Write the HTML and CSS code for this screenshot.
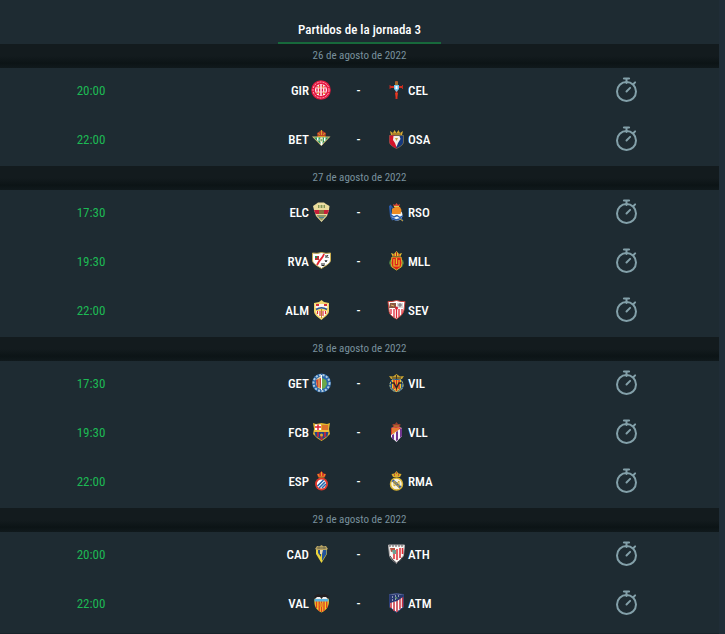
FILE: index.html
```html
<!DOCTYPE html>
<html lang="es">
<head>
<meta charset="utf-8">
<meta name="viewport" content="width=device-width, initial-scale=1">
<title>Partidos de la jornada 3</title>
<link rel="stylesheet" href="styles.css">
</head>
<body>
<svg class="defs" aria-hidden="true">
  <symbol id="stopwatch" viewBox="0 0 24 26">
    <g fill="none" stroke="currentColor" stroke-width="2">
      <circle cx="11.500" cy="14.500" r="9.500"/>
      <path d="M9 1.500h5" stroke-width="2.200" stroke-linecap="round"/>
      <path d="M11.500 2v4M18.500 7l1.600-1.600M11.500 14.500l3.600-3.600" stroke-linecap="round"/>
    </g>
  </symbol>
</svg>
<main class="panel">
  <header class="head"><h1 class="title">Partidos de la jornada 3</h1></header>

  <section>
    <h2 class="date">26 de agosto de 2022</h2>
    <article class="match">
      <time class="hour">20:00</time>
      <div class="teams">
        <span class="home">GIR</span>
        <svg class="crest" viewBox="0 0 20 20"><circle cx="10" cy="10" r="9.8" fill="#e5173f"/><circle cx="10" cy="10" r="8" fill="none" stroke="#ffb3bf" stroke-width="1" stroke-dasharray="2 1"/><circle cx="10" cy="10" r="6" fill="#fff"/><path d="M6 6v8M8.600 4.500v11M11.400 4.500v11M14 6v8" stroke="#e5173f" stroke-width="1.400"/><path d="M5 8h10M5 12h10" stroke="#ffd2d2"/><path d="M8 6v2M12 6v2M7 12v2M13 12v2" stroke="#e99a20"/></svg>
        <span class="dash">-</span>
        <svg class="crest" viewBox="0 0 20 20"><path d="M10.500 1v18M4 7h13" stroke="#d02f20" stroke-width="2"/><path d="M4 5v4M16.500 5v4" stroke="#b92b20"/><path d="M8 5h5v4l-2.500 3L8 9z" fill="#72c6ed"/><path d="M9.500 6h2v3h-2z" fill="#fff"/><path d="M9 1.500h3V5H9z" fill="#a06b2b"/><path d="M9 13l1.500 6 1.500-6z" fill="#e63922"/></svg>
        <span class="away">CEL</span>
      </div>
      <svg class="status" role="img" aria-label="Pendiente"><use href="#stopwatch"/></svg>
    </article>
    <article class="match">
      <time class="hour">22:00</time>
      <div class="teams">
        <span class="home">BET</span>
        <svg class="crest" viewBox="0 0 20 20"><path d="M1 7.500h18.500L10.300 17z" fill="#d6bd72"/><path d="M3 8.500h14.500L10.300 15.500z" fill="#1f9660"/><path d="M6 8.500h1.500v4L6 11zM9.500 8.500h2v7l-1 1-1-1zM13 8.500h1.500v3L13 12.500z" fill="#fff"/><circle cx="10.400" cy="11" r="2" fill="#eee5ae"/><path d="M9.500 11h2" stroke="#168250"/><path d="M6.500 7.500L6 4l2.500-1.500L10.400 1l2 1.500L15 4l-.5 3.500z" fill="#bc4028"/><path d="M6.500 7.500h8M7.500 4l1 2M13.500 4l-1 2M10.500 1v5" stroke="#d9a02c"/></svg>
        <span class="dash">-</span>
        <svg class="crest" viewBox="0 0 20 20"><path d="M3.500 6.500h14V13c0 3-4 5-7 6.500-3-1.500-7-3.500-7-6.500z" fill="#16397d" stroke="#b79c54" stroke-width=".5"/><path d="M3.500 6.500H9l1.500 13c-3-1.500-7-3.500-7-6.500z" fill="#d3132b"/><path d="M7.500 7h6l1 3-2.500 4-1.500 4L9 14l-2-3z" fill="#f3eee8"/><path d="M9 9h3l-1.500 3z" fill="#c9a23f"/><path d="M5 6L4 2l3 2 1.500-3 2 3 2-3L14 4l3-2-1 4z" fill="#d8ac32"/><path d="M6 5h9" stroke="#7d5520"/></svg>
        <span class="away">OSA</span>
      </div>
      <svg class="status" role="img" aria-label="Pendiente"><use href="#stopwatch"/></svg>
    </article>
  </section>

  <section>
    <h2 class="date">27 de agosto de 2022</h2>
    <article class="match">
      <time class="hour">17:30</time>
      <div class="teams">
        <span class="home">ELC</span>
        <svg class="crest" viewBox="0 0 20 20"><path d="M2 4l3-2 2-1.500h6l2 1.500 3.500 2-.5 4-2 6-5.500 6-5.500-6-2-6z" fill="#eadb9c"/><path d="M3 8h5v4H4.500zM12.500 8H18l-1.500 4h-4z" fill="#c71f39"/><path d="M8 8h5v4H8z" fill="#8b713c"/><path d="M5.500 13h10l-5 5.500z" fill="#4a8391"/><path d="M7 3h7v3H7z" fill="#839451"/><path d="M9 2v4M12 2v4" stroke="#f2e8bd"/><path d="M6 14h9M8 17h4" stroke="#d1a640"/></svg>
        <span class="dash">-</span>
        <svg class="crest" viewBox="0 0 20 20"><path d="M4 3l13 16" stroke="#2659a7" stroke-width="1.500"/><path d="M4 4l1 10 2 4" fill="none" stroke="#2c5eaf" stroke-width="2"/><circle cx="11" cy="13" r="5.500" fill="#f1f5f5"/><path d="M5 13l3 2 3-1.500 3 2 3-1.500M6 16l4 2 5-1.500" fill="none" stroke="#295cab" stroke-width="1.500"/><path d="M6 12V7l3-2h5l1.500 3-1 4z" fill="#ee8b23"/><path d="M8 5L7 2l2 1 1.500-2L12 3l2-1-1 3z" fill="#df4935"/><path d="M8 4.500h5" stroke="#dbcb59"/><path d="M14 17l3 2" stroke="#d5a328"/></svg>
        <span class="away">RSO</span>
      </div>
      <svg class="status" role="img" aria-label="Pendiente"><use href="#stopwatch"/></svg>
    </article>
    <article class="match">
      <time class="hour">19:30</time>
      <div class="teams">
        <span class="home">RVA</span>
        <svg class="crest" viewBox="0 0 20 20"><path d="M1.500 2Q6 3 10.500 1.500 15 3 19.500 2v7c0 4-6 6-9 8.500C7 15 1.500 13 1.500 9z" fill="#fff" stroke="#c9ad51"/><path d="M13 3q-1 3-3 5t-4 6" fill="none" stroke="#e72832" stroke-width="1.800"/><path d="M4 5h4v4H4z" fill="#b83432"/><path d="M4 5h2v2H4z" fill="#2c8756"/><path d="M15 4v3M17 4l-1 1.500L17.500 7M14 9l1 2 1-2M11 12v3l1-1 1 1v-3" fill="none" stroke="#222"/></svg>
        <span class="dash">-</span>
        <svg class="crest" viewBox="0 0 20 20"><path d="M5 9l-1 3 2 4M16 9l1 3-2 4" stroke="#477744" stroke-width="2" fill="none"/><path d="M6 6h9l1 6-1 4-4.500 3L6 16l-1-4z" fill="#dd2119" stroke="#dab82c"/><path d="M8 8v7h5V9M10.500 7v6" fill="none" stroke="#e8bf2b" stroke-width="1.200"/><path d="M6.500 5L5 2l3 1 2.500-3L13 3l3-1-1.500 3z" fill="#e9c330"/><path d="M10.500 1v4M8 3v2M13 3v2" stroke="#b9281e"/></svg>
        <span class="away">MLL</span>
      </div>
      <svg class="status" role="img" aria-label="Pendiente"><use href="#stopwatch"/></svg>
    </article>
    <article class="match">
      <time class="hour">22:00</time>
      <div class="teams">
        <span class="home">ALM</span>
        <svg class="crest" viewBox="0 0 20 20"><path d="M3 3l5-1 2.500-2L13 2l5 1v8c0 4-5 6-7.500 9C7 17 3 15 3 11z" fill="#f3d66b"/><path d="M4.500 4h12v4h-12z" fill="#fff3ec"/><path d="M5 4h3v2H5zM13 4h3v2h-3z" fill="#d53137"/><path d="M5 9.500q5.500-3.500 11 0" fill="none" stroke="#27569a" stroke-width="1.500"/><path d="M5 11h11c0 3-3 5-5.500 7C8 16 5 14 5 11z" fill="#fff"/><path d="M6.500 11v3M9 11v5M12 11v5M14.500 11v3" stroke="#d62b34" stroke-width="1.200"/><path d="M10.500 9v9" stroke="#bd842c"/></svg>
        <span class="dash">-</span>
        <svg class="crest" viewBox="0 0 20 20"><path d="M2 1.500Q6 2 10.500.5 15 2 19 1.500L18 10c-1 5-5 7-7.500 9C7 17 3 15 3 10z" fill="#fff" stroke="#c8433d"/><path d="M4 3h6v5H3z" fill="#8b5943"/><path d="M11 3h6v5h-6z" fill="#d9d5d5"/><path d="M12 5h4M14 3v4" stroke="#6d6d78"/><path d="M5 9v5M8 9v8M10.500 9v9M13 9v8M16 9v5" stroke="#df2736" stroke-width="1.300"/><path d="M5 5l3 1" stroke="#e5b46b"/><circle cx="10.500" cy="8" r="1.500" fill="#d52030"/></svg>
        <span class="away">SEV</span>
      </div>
      <svg class="status" role="img" aria-label="Pendiente"><use href="#stopwatch"/></svg>
    </article>
  </section>

  <section>
    <h2 class="date">28 de agosto de 2022</h2>
    <article class="match">
      <time class="hour">17:30</time>
      <div class="teams">
        <span class="home">GET</span>
        <svg class="crest" viewBox="0 0 20 20"><circle cx="10.500" cy="10" r="9.500" fill="#2a68aa"/><circle cx="10.500" cy="10" r="8" fill="none" stroke="#b6cbda" stroke-width="2" stroke-dasharray="2 1.500"/><path d="M5.500 6L10 3v13l-3-1-2-4z" fill="#e5d7ac"/><path d="M5 7l5-2v10l-4-1z" fill="#c94336"/><path d="M8 6v9" stroke="#efcf55"/><path d="M11 5l4 2 1 4-2 4-3 1z" fill="#6ca849"/><path d="M10.500 2v15" stroke="#fff"/></svg>
        <span class="dash">-</span>
        <svg class="crest" viewBox="0 0 20 20"><circle cx="10.500" cy="12" r="7.200" fill="#245b96"/><circle cx="10.500" cy="12" r="6.500" fill="none" stroke="#d7c25b" stroke-dasharray="2 1"/><path d="M6 7h9v8l-4.500 4L6 15z" fill="#f0ca2d"/><path d="M8 7v9M10.500 7v11M13 7v9" stroke="#d12a27" stroke-width="1.400"/><path d="M5 10h3l2.500 5L13 10h3" fill="none" stroke="#292829" stroke-width="1.500"/><path d="M5 6L3 3l4 .5L10.500 1l3.500 2.500L18 3l-2 3z" fill="#c5a131"/><path d="M6 5h9M10.500 2v4" stroke="#423421"/></svg>
        <span class="away">VIL</span>
      </div>
      <svg class="status" role="img" aria-label="Pendiente"><use href="#stopwatch"/></svg>
    </article>
    <article class="match">
      <time class="hour">19:30</time>
      <div class="teams">
        <span class="home">FCB</span>
        <svg class="crest" viewBox="0 0 20 20"><path d="M2 1l3 1 5.500-1L16 2l3-1-1 6 1 5-4 4-4.500 3L6 16l-4-4 1-5z" fill="#e2b22c"/><path d="M4 2.500h6V8H4z" fill="#fff"/><path d="M7 2.500V8M4 5h6" stroke="#e0212f" stroke-width="1.500"/><path d="M12 3v5M14 3v5M16 3v5" stroke="#db302a"/><path d="M3 8h15v2H3z" fill="#edc13d"/><path d="M3.500 10h14l-1 4-6 4-6-4z" fill="#23458a"/><path d="M7 10v5M14 10v5M10.500 14v4" stroke="#b42a41" stroke-width="2"/><circle cx="10.500" cy="13" r="1.500" fill="#dfa92a"/></svg>
        <span class="dash">-</span>
        <svg class="crest" viewBox="0 0 20 20"><path d="M5 6q6-2 11 0v8l-5.500 6L5 15z" fill="#f8f3fa"/><path d="M5 6q5-2 10.500 0L5 13z" fill="#d8382b"/><path d="M6 7h7M6 9h5M6 11h3" stroke="#f0c43d"/><path d="M6 13l2-1v6l-2-2zM10 10l2-1v9l-2 1zM14 7l2-1v8l-2 2z" fill="#70358e"/><path d="M7 5L6.500 2H9l1.500-2L12 2h2.500L14 5z" fill="#973e2e"/><path d="M8 4h5" stroke="#c98d32"/></svg>
        <span class="away">VLL</span>
      </div>
      <svg class="status" role="img" aria-label="Pendiente"><use href="#stopwatch"/></svg>
    </article>
    <article class="match">
      <time class="hour">22:00</time>
      <div class="teams">
        <span class="home">ESP</span>
        <svg class="crest" viewBox="0 0 20 20"><circle cx="10.500" cy="13" r="6.500" fill="#df372b"/><circle cx="10.500" cy="13" r="4.600" fill="#fff"/><path d="M6.500 15l6-6M8 17l6-6M11 17l4-4" stroke="#2567ab" stroke-width="1.600"/><path d="M7 6L6 3l2.500-.5L10.500 0l2 2.500L15 3l-1 3z" fill="#dd3526"/><path d="M7.500 6h6M10.500 1v4M7 3l1 2M14 3l-1 2" stroke="#e5a927"/></svg>
        <span class="dash">-</span>
        <svg class="crest" viewBox="0 0 20 20"><circle cx="10.500" cy="13" r="6" fill="#f7f2dc" stroke="#d9b332" stroke-width="1.500"/><path d="M5.500 10l2-1.500 8 7-2 2z" fill="#3c60a3"/><path d="M8 15v-5l2.500 3 2.500-3v5M8 15q3-3 5 2" fill="none" stroke="#d1a82c"/><path d="M7 6L5.500 3l3-.5L10.500 0l2 2.500 3 .5L14 6z" fill="#d8ad2c"/><path d="M8 4h1M12 4h1M10 2h1" stroke="#bf3434" stroke-width="1.500"/></svg>
        <span class="away">RMA</span>
      </div>
      <svg class="status" role="img" aria-label="Pendiente"><use href="#stopwatch"/></svg>
    </article>
  </section>

  <section>
    <h2 class="date">29 de agosto de 2022</h2>
    <article class="match">
      <time class="hour">20:00</time>
      <div class="teams">
        <span class="home">CAD</span>
        <svg class="crest" viewBox="0 0 20 20"><path d="M5 5h11v5l-5.500 9L5 10z" fill="#e9d33b"/><path d="M11 6h4.500v4l-4.500 7z" fill="#24549b"/><path d="M7 6h3v7l-3-4z" fill="#274d86"/><path d="M9 6h3l-1 4H9z" fill="#e8d9ae"/><path d="M4 5l2-3h3l1.500-1L12 2h3l2 3-2 1H6z" fill="#b7a464"/><path d="M6 4h9M8 2v3M13 2v3" stroke="#706b4c"/></svg>
        <span class="dash">-</span>
        <svg class="crest" viewBox="0 0 20 20"><path d="M2.500 1h16l-1 10c-1 4-5 6-7 8.500C8 17 4 15 3.500 11z" fill="#faf8f6" stroke="#b4afb0"/><path d="M3 2h15" stroke="#545456" stroke-dasharray="2 1"/><path d="M8 8v7M11 5v11M14 4v10M16.500 4v6" stroke="#df2c34" stroke-width="1.500"/><path d="M4 4h5v3l-4 1z" fill="#b6513f"/><path d="M6 6h4v4H7z" fill="#6e9e91"/><path d="M4 12l3 4 3.500 3 4-3 2-3" fill="none" stroke="#4a464a"/></svg>
        <span class="away">ATH</span>
      </div>
      <svg class="status" role="img" aria-label="Pendiente"><use href="#stopwatch"/></svg>
    </article>
    <article class="match">
      <time class="hour">22:00</time>
      <div class="teams">
        <span class="home">VAL</span>
        <svg class="crest" viewBox="0 0 20 20"><path d="M4 5h13l1 2c0 6-2 10-7.500 12.500C5 17 3 13 3.500 7z" fill="#f5cc27"/><path d="M5.500 8v7M8.200 8v10M10.500 8v11M13 8v10M15.700 8v7" stroke="#de3f23" stroke-width="1.400"/><path d="M3.500 6h14v2.500h-14z" fill="#5eb3dd"/><path d="M4 6L3.500 3 7 1l3.500 1L14 1l3.500 2L17 6l-4-1-2.500 1L8 5z" fill="#231f20"/><path d="M4 6l2-2h3l1.500 2L12 4h3l2 2z" fill="#eee"/><circle cx="10.500" cy="12" r="2" fill="#e68926"/></svg>
        <span class="dash">-</span>
        <svg class="crest" viewBox="0 0 20 20"><path d="M3.500 1.500l7-1 7 1V14l-7 5.500-7-5.500z" fill="#fff" stroke="#2d3f78"/><path d="M5 9v6M8 9v9M11 7v12M14 5v11M16.500 4v10" stroke="#c83341" stroke-width="1.500"/><path d="M4 2l6.500-1 6.500 1v2l-6 4-7 2z" fill="#27376f"/><path d="M6 4h1M9 3h1M12 3h1M6 7h1M9 6h1" stroke="#fff"/><path d="M9 5q2-2 2 1" stroke="#65a066" fill="none"/></svg>
        <span class="away">ATM</span>
      </div>
      <svg class="status" role="img" aria-label="Pendiente"><use href="#stopwatch"/></svg>
    </article>
  </section>
</main>
</body>
</html>
```
FILE: styles.css
```css
* { box-sizing: border-box; }
body {
  margin: 0;
  padding-right: 6px;
  min-height: 100vh;
  background: #202d37;
  color: #fff;
  font-family: "Ubuntu Condensed", "Roboto Condensed", "Liberation Sans Narrow", "Liberation Sans", sans-serif;
  font-size: 13px;
}
.defs { position: absolute; width: 0; height: 0; }
.panel {
  background: #1e2b32;
  padding-bottom: 3px;
  border-bottom: 1px solid #18232a;
}
.head { display: flex; justify-content: center; padding-top: 18px; }
.title {
  margin: 0;
  padding: 0 20px;
  font-size: 13px;
  line-height: 24px;
  font-weight: 500;
  border-bottom: 2px solid #17693b;
}
.date {
  margin: 0;
  font-size: 11px;
  line-height: 24px;
  font-weight: 400;
  text-align: center;
  color: #78909c;
  background: linear-gradient(#131b1e 50%, #0c1416 80%, #10191c);
}
.match {
  display: grid;
  grid-template-columns: 182fr 353fr 184fr;
  align-items: center;
  justify-items: center;
  height: 49px;
  padding-bottom: 5px;
}
.hour { color: #1db954; }
.teams {
  display: grid;
  grid-template-columns: 1fr 20px 51px 20px 1fr;
  gap: 2px;
  align-items: center;
  width: 100%;
  font-weight: 500;
}
.home { text-align: right; }
.dash { text-align: center; }
.crest { display: block; width: 20px; height: 20px; }
.status { width: 24px; height: 26px; color: #83a0a9; }
```
